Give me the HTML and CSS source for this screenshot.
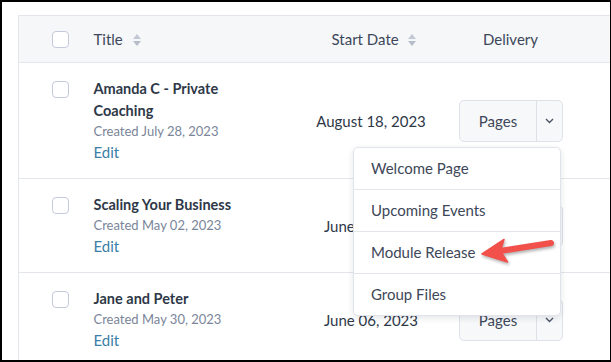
FILE: index.html
```html
<!DOCTYPE html>
<html lang="en">
<head>
  <meta charset="UTF-8">
  <title>Offers - Delivery</title>
  <link rel="stylesheet" href="styles.css">
</head>
<body>
  <div class="moldura">
    <table class="lista">
      <tr>
        <th class="col-check"><span class="caixa"></span></th>
        <th class="col-titulo">Title <span class="ordenar"><i class="seta-cima"></i><i class="seta-baixo"></i></span></th>
        <th class="col-data">Start Date <span class="ordenar"><i class="seta-cima"></i><i class="seta-baixo"></i></span></th>
        <th class="col-entrega">Delivery</th>
        <th class="col-resto"></th>
      </tr>
      <tr>
        <td class="col-check"><span class="caixa"></span></td>
        <td class="col-titulo">
          <div class="nome">Amanda C - Private<br>Coaching</div>
          <div class="criado">Created July 28, 2023</div>
          <a class="editar" href="#">Edit</a>
        </td>
        <td class="col-data">August 18, 2023</td>
        <td class="col-entrega">
          <div class="grupo-botao">
            <button class="botao-pages">Pages</button>
            <button class="botao-caret">
              <svg width="9" height="6" viewBox="0 0 9 6"><path d="M1 1l3.5 3.5L8 1" fill="none" stroke="#4a5466" stroke-width="1.4"/></svg>
            </button>
            <ul class="menu">
              <li>Welcome Page</li>
              <li>Upcoming Events</li>
              <li>Module Release</li>
              <li>Group Files</li>
            </ul>
          </div>
        </td>
        <td class="col-resto"></td>
      </tr>
      <tr>
        <td class="col-check"><span class="caixa"></span></td>
        <td class="col-titulo">
          <div class="nome">Scaling Your Business</div>
          <div class="criado">Created May 02, 2023</div>
          <a class="editar" href="#">Edit</a>
        </td>
        <td class="col-data">June 02, 2023</td>
        <td class="col-entrega">
          <div class="grupo-botao">
            <button class="botao-pages">Pages</button>
            <button class="botao-caret">
              <svg width="9" height="6" viewBox="0 0 9 6"><path d="M1 1l3.5 3.5L8 1" fill="none" stroke="#4a5466" stroke-width="1.4"/></svg>
            </button>
          </div>
        </td>
        <td class="col-resto"></td>
      </tr>
      <tr>
        <td class="col-check"><span class="caixa"></span></td>
        <td class="col-titulo">
          <div class="nome">Jane and Peter</div>
          <div class="criado">Created May 30, 2023</div>
          <a class="editar" href="#">Edit</a>
        </td>
        <td class="col-data">June 06, 2023</td>
        <td class="col-entrega">
          <div class="grupo-botao">
            <button class="botao-pages">Pages</button>
            <button class="botao-caret">
              <svg width="9" height="6" viewBox="0 0 9 6"><path d="M1 1l3.5 3.5L8 1" fill="none" stroke="#4a5466" stroke-width="1.4"/></svg>
            </button>
          </div>
        </td>
        <td class="col-resto"></td>
      </tr>
    </table>

    <!-- seta de destaque -->
    <svg class="seta" width="80" height="36" viewBox="478 234 80 36">
      <line x1="500" y1="251" x2="551" y2="243" stroke="#f2504b" stroke-width="6" stroke-linecap="round"/>
      <polygon points="482,254 504,239.5 500.5,251 507.5,262" fill="#f2504b" stroke="#f2504b" stroke-width="1.5" stroke-linejoin="round"/>
    </svg>
  </div>
</body>
</html>
```

FILE: styles.css
```css
:root {
  --borda: #e3e6eb;
  --fundo-cabecalho: #f6f7f9;
  --texto: #2e3848;
  --texto-medio: #3d4759;
  --cinza: #7a8599;
  --azul-link: #3a80a8;
}

body {
  margin: 0;
  font-family: Lato, 'Open Sans', sans-serif;
  color: var(--texto);
  background: #ffffff;
}

.moldura {
  position: relative;
  width: 608px;
  height: 358px;
  border-style: solid;
  border-color: #000;
  border-width: 2px 1px 2px 2px;
  overflow: hidden;
  background: #fff;
}

.lista {
  margin: 13px 0 0 16px;
  border-collapse: collapse;
  width: 700px;
  table-layout: fixed;
  border: 1px solid var(--borda);
}

.lista th,
.lista td {
  padding: 0;
  box-sizing: border-box;
  border-bottom: 1px solid var(--borda);
}

.lista th {
  height: 47px;
  background: var(--fundo-cabecalho);
  font-weight: normal;
  font-size: 15px;
  color: var(--texto-medio);
  text-align: left;
  vertical-align: middle;
}

.lista td {
  vertical-align: middle;
  font-size: 15px;
}

.col-check { width: 75px; }
.col-titulo { width: 206px; }
.col-data { width: 140px; }
.col-entrega { width: 142px; }

.lista th.col-check,
.lista td.col-check {
  padding-left: 33px;
}

.lista td.col-check {
  vertical-align: top;
  padding-top: 18px;
}

.lista th.col-data {
  padding-left: 32px;
}

.lista th.col-entrega,
.lista td.col-entrega,
.lista td.col-data {
  text-align: center;
}

.lista td.col-data {
  padding-left: 3px;
}

.lista td.col-titulo {
  padding: 15px 0 15px 0;
}

.caixa {
  display: block;
  width: 17px;
  height: 17px;
  box-sizing: border-box;
  border: 1.5px solid #c4cadb;
  border-radius: 4px;
  background: #fff;
}

.ordenar {
  display: inline-flex;
  flex-direction: column;
  gap: 2px;
  margin-left: 6px;
  vertical-align: middle;
  position: relative;
  top: -1px;
}

.seta-cima,
.seta-baixo {
  width: 0;
  height: 0;
  border-left: 4.5px solid transparent;
  border-right: 4.5px solid transparent;
}

.seta-cima { border-bottom: 5px solid #c3c9d4; }
.seta-baixo { border-top: 5px solid #b6bdca; }

.nome {
  font-weight: bold;
  font-size: 14.5px;
  line-height: 22px;
  color: var(--texto);
}

.criado {
  font-size: 13px;
  line-height: 19px;
  color: var(--cinza);
}

.editar {
  display: block;
  font-size: 15px;
  line-height: 22px;
  color: var(--azul-link);
  text-decoration: none;
}

.grupo-botao {
  position: relative;
  display: inline-flex;
  height: 42px;
  margin-left: 1px;
  border: 1px solid #dde1e8;
  border-radius: 5px;
  background: #f7f8fa;
  box-sizing: border-box;
  vertical-align: middle;
}

.grupo-botao button {
  border: none;
  background: none;
  font-family: inherit;
  font-size: 15px;
  color: var(--texto-medio);
  padding: 0;
  cursor: pointer;
}

.botao-pages {
  width: 76px;
}

.botao-caret {
  width: 26px;
  border-left: 1px solid #dde1e8 !important;
  display: flex;
  align-items: center;
  justify-content: center;
}

.menu {
  position: absolute;
  top: calc(100% + 6px);
  right: 1px;
  z-index: 10;
  width: 208px;
  margin: 0;
  padding: 0;
  list-style: none;
  text-align: left;
  background: #fff;
  border: 1px solid #e1e4ea;
  border-radius: 5px;
  box-shadow: 0 2px 6px rgba(30, 40, 60, 0.12);
  box-sizing: border-box;
}

.menu li {
  height: 41px;
  line-height: 41px;
  padding-left: 17px;
  font-size: 15px;
  color: var(--texto-medio);
  border-bottom: 1px solid #e3e6eb;
}

.menu li:last-child {
  border-bottom: none;
}

.seta {
  position: absolute;
  left: 476px;
  top: 232px;
  z-index: 20;
  filter: drop-shadow(1px 2px 1.5px rgba(0, 0, 0, 0.3));
}
```
